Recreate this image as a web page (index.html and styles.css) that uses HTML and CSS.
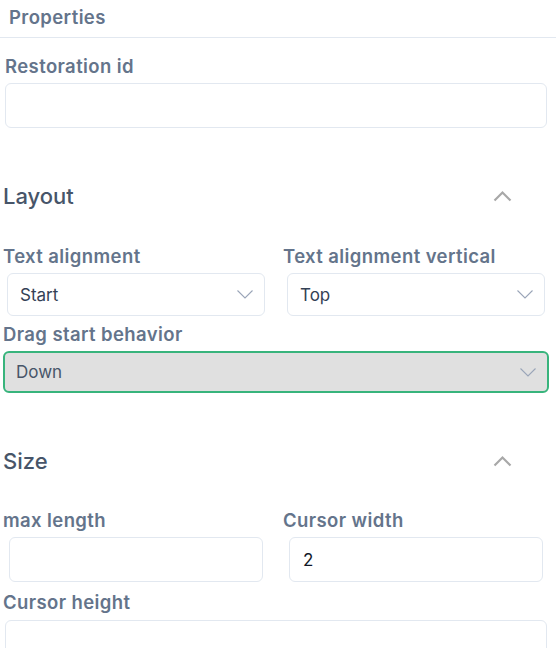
FILE: index.html
```html
<!DOCTYPE html>
<html lang="en">
<head>
<meta charset="utf-8">
<title>Properties</title>
<link rel="stylesheet" href="styles.css">
</head>
<body>
<div class="panel">
  <div class="panel-header">Properties</div>

  <div class="field field-restoration">
    <div class="label">Restoration id</div>
    <div class="input input-full"></div>
  </div>

  <div class="section section-layout">
    <div class="section-head">
      <span class="section-title">Layout</span>
      <svg class="chev-up" width="19" height="12" viewBox="0 0 19 12"><path d="M1.5 10.5 L9.5 2.5 L17.5 10.5" fill="none" stroke="#a8a8a8" stroke-width="2.2"/></svg>
    </div>
    <div class="grid grid-layout">
      <div class="cell">
        <div class="label">Text alignment</div>
        <div class="select select-inset">
          <span>Start</span>
          <svg class="chev-down" width="16" height="9" viewBox="0 0 16 9"><path d="M0.5 0.5 L8 8 L15.5 0.5" fill="none" stroke="#9aa5b8" stroke-width="1.1"/></svg>
        </div>
      </div>
      <div class="cell">
        <div class="label">Text alignment vertical</div>
        <div class="select select-inset">
          <span>Top</span>
          <svg class="chev-down" width="16" height="9" viewBox="0 0 16 9"><path d="M0.5 0.5 L8 8 L15.5 0.5" fill="none" stroke="#9aa5b8" stroke-width="1.1"/></svg>
        </div>
      </div>
      <div class="cell cell-wide">
        <div class="label">Drag start behavior</div>
        <div class="select select-disabled">
          <span>Down</span>
          <svg class="chev-down" width="16" height="9" viewBox="0 0 16 9"><path d="M0.5 0.5 L8 8 L15.5 0.5" fill="none" stroke="#9aa5b8" stroke-width="1.1"/></svg>
        </div>
      </div>
    </div>
  </div>

  <div class="section section-size">
    <div class="section-head">
      <span class="section-title">Size</span>
      <svg class="chev-up" width="19" height="12" viewBox="0 0 19 12"><path d="M1.5 10.5 L9.5 2.5 L17.5 10.5" fill="none" stroke="#a8a8a8" stroke-width="2.2"/></svg>
    </div>
    <div class="grid grid-size">
      <div class="cell">
        <div class="label">max length</div>
        <div class="input input-inset"></div>
      </div>
      <div class="cell">
        <div class="label">Cursor width</div>
        <div class="input input-inset"><span class="value">2</span></div>
      </div>
      <div class="cell cell-wide cell-cursor-height">
        <div class="label">Cursor height</div>
        <div class="input input-height"></div>
      </div>
    </div>
  </div>
</div>
</body>
</html>
```

FILE: styles.css
```css
html, body {
  margin: 0;
  padding: 0;
  background: #ffffff;
  font-family: Inter, "Noto Sans", sans-serif;
  overflow: hidden;
}

.panel {
  width: 556px;
  height: 648px;
  overflow: hidden;
}

.panel-header {
  height: 30px;
  padding: 7px 0 0 9px;
  border-bottom: 1px solid #e2e8f0;
  font-size: 18.5px;
  line-height: 20px;
  letter-spacing: 0.4px;
  font-weight: 600;
  color: #64748b;
}

.label {
  font-size: 18.5px;
  line-height: 20px;
  letter-spacing: 0.4px;
  font-weight: 600;
  color: #64748b;
  white-space: nowrap;
}

.field-restoration {
  padding: 0 9px 0 5px;
  margin-top: 18px;
}

.input {
  box-sizing: border-box;
  height: 45px;
  border: 1px solid #e2e8f0;
  border-radius: 6px;
  background: #fff;
  display: flex;
  align-items: center;
}

.input-full {
  margin-top: 7px;
}

.section {
  padding: 0 7px 0 3px;
}

.section-layout {
  margin-top: 56px;
}

.section-size {
  margin-top: 56px;
}

.section-head {
  display: flex;
  align-items: center;
  justify-content: space-between;
  height: 24px;
  padding-right: 37px;
}

.section-title {
  font-size: 22px;
  line-height: 24px;
  font-weight: 500;
  color: #475569;
}

.chev-up {
  display: block;
}

.grid {
  display: grid;
  grid-template-columns: 266px 266px;
  column-gap: 14px;
}

.grid-layout {
  margin-top: 38px;
}

.grid-size {
  margin-top: 37px;
}

.cell-wide {
  grid-column: 1 / span 2;
}

.select {
  box-sizing: border-box;
  display: flex;
  align-items: center;
  justify-content: space-between;
  border-radius: 6px;
  padding: 0 11px 0 12px;
  font-size: 17px;
  color: #334155;
}

.select-inset {
  margin: 7px 4px 0 4px;
  height: 43px;
  border: 1px solid #e2e8f0;
  background: #fff;
}

.select-disabled {
  margin-top: 7px;
  height: 42px;
  border: 2px solid #38b47c;
  background: #e0e0e0;
  color: #475569;
  padding-left: 11px;
}

.grid-layout .cell-wide {
  margin-top: 8px;
}

.chev-down {
  display: block;
}

.input-inset {
  margin: 7px 6px 0 6px;
  padding-left: 13px;
}

.value {
  font-size: 17px;
  color: #111827;
}

.cell-cursor-height {
  margin-top: 10px;
}

.input-height {
  margin: 8px 2px 0 2px;
}
```
